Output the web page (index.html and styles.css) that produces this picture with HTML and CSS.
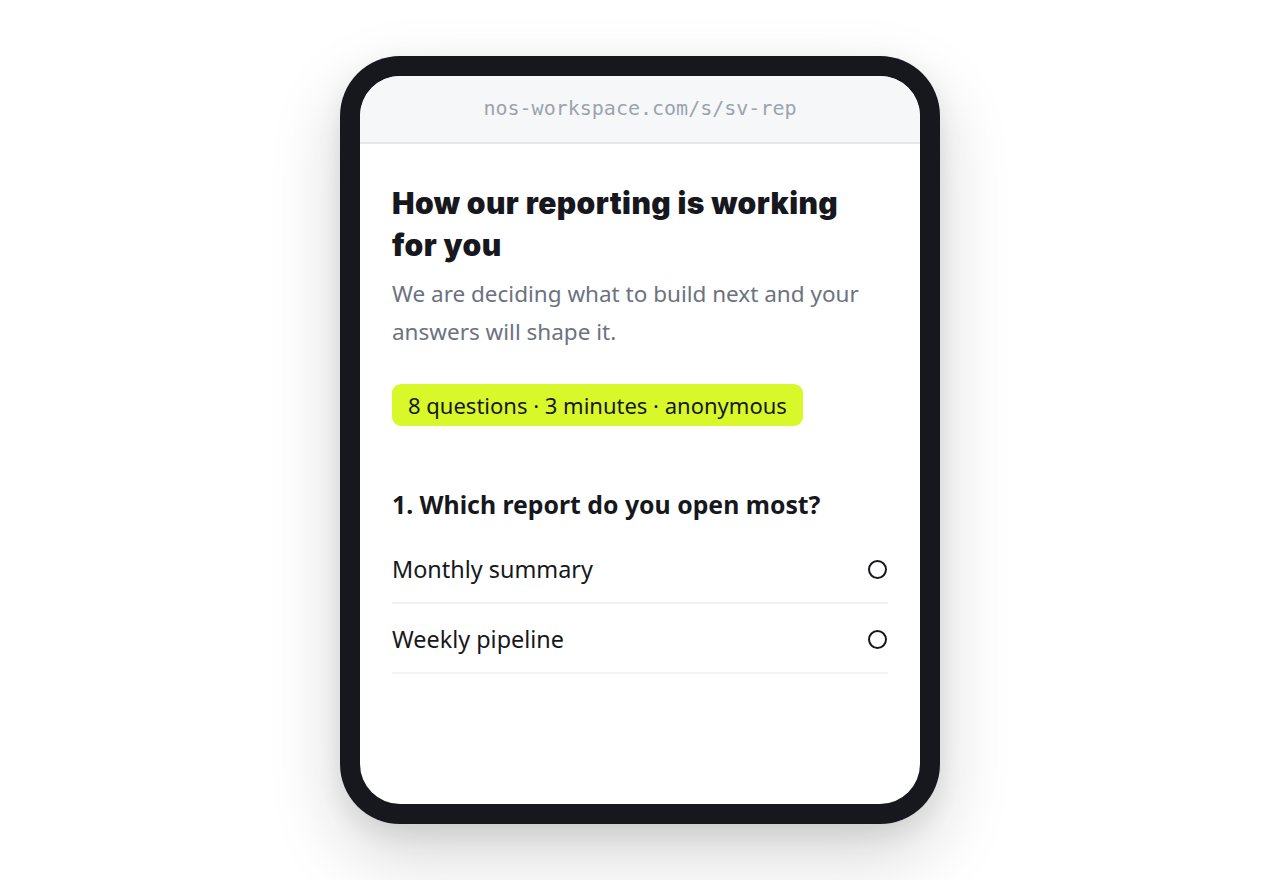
FILE: index.html
```html
<!DOCTYPE html>
<html lang="en">
<head>
<meta charset="utf-8">
<title>Survey</title>
<link rel="stylesheet" href="styles.css">
</head>
<body>
<div class="stage">
  <div class="phone">
    <div class="screen">
      <div class="urlbar">nos-workspace.com/s/sv-rep</div>
      <div class="content">
        <h1 class="title">How our reporting is working for you</h1>
        <p class="subtitle">We are deciding what to build next and your answers will shape it.</p>
        <div class="badge">8 questions · 3 minutes · anonymous</div>
        <h2 class="question">1. Which report do you open most?</h2>
        <ul class="options">
          <li class="option"><span>Monthly summary</span><span class="radio"></span></li>
          <li class="option"><span>Weekly pipeline</span><span class="radio"></span></li>
        </ul>
      </div>
    </div>
  </div>
</div>
</body>
</html>
```
FILE: styles.css
```css
* { box-sizing: border-box; }
html, body { margin: 0; padding: 0; background: #ffffff; }
body { font-family: "Noto Sans", "Open Sans", sans-serif; color: #16181d; }
.stage {
  width: 1280px;
  height: 880px;
  display: flex;
  justify-content: center;
  padding-top: 56px;
}
.phone {
  width: 600px;
  height: 768px;
  background: #16181d;
  border-radius: 60px;
  padding: 20px;
  box-shadow: 0 30px 70px rgba(20, 24, 30, 0.18), 0 10px 25px rgba(20,24,30,0.08);
}
.screen {
  width: 100%;
  height: 100%;
  background: #ffffff;
  border-radius: 40px;
  overflow: hidden;
}
.urlbar {
  height: 68px;
  background: #f6f7f9;
  border-bottom: 2px solid #e5e7eb;
  display: flex;
  align-items: center;
  justify-content: center;
  font-family: "DejaVu Sans Mono", monospace;
  font-size: 20px;
  color: #9ca3af;
  padding-bottom: 2px;
}
.content { padding: 38px 32px 0; }
.title {
  margin: 0;
  max-width: 470px;
  font-family: Inter, sans-serif;
  font-weight: 900;
  font-size: 30px;
  line-height: 42px;
  letter-spacing: 0.4px;
  color: #16181d;
}
.subtitle {
  margin: 9px 0 0;
  font-size: 22.5px;
  line-height: 38px;
  color: #6b7280;
}
.badge {
  display: inline-block;
  margin-top: 33px;
  background: #d8f82a;
  border-radius: 9px;
  padding: 0 16px;
  height: 42px;
  line-height: 42px;
  font-size: 22px;
  color: #16181d;
}
.question {
  margin: 61px 0 0;
  font-size: 24.8px;
  line-height: 34px;
  font-weight: 700;
}
.options { list-style: none; margin: 13px 0 0; padding: 0; }
.option {
  height: 70px;
  display: flex;
  align-items: center;
  justify-content: space-between;
  border-bottom: 2px solid #f0f1f3;
  font-size: 23.4px;
  padding-top: 2px;
}
.radio {
  width: 19px;
  height: 19px;
  border: 2px solid #16181d;
  border-radius: 50%;
  margin-right: 1px;
}
```
